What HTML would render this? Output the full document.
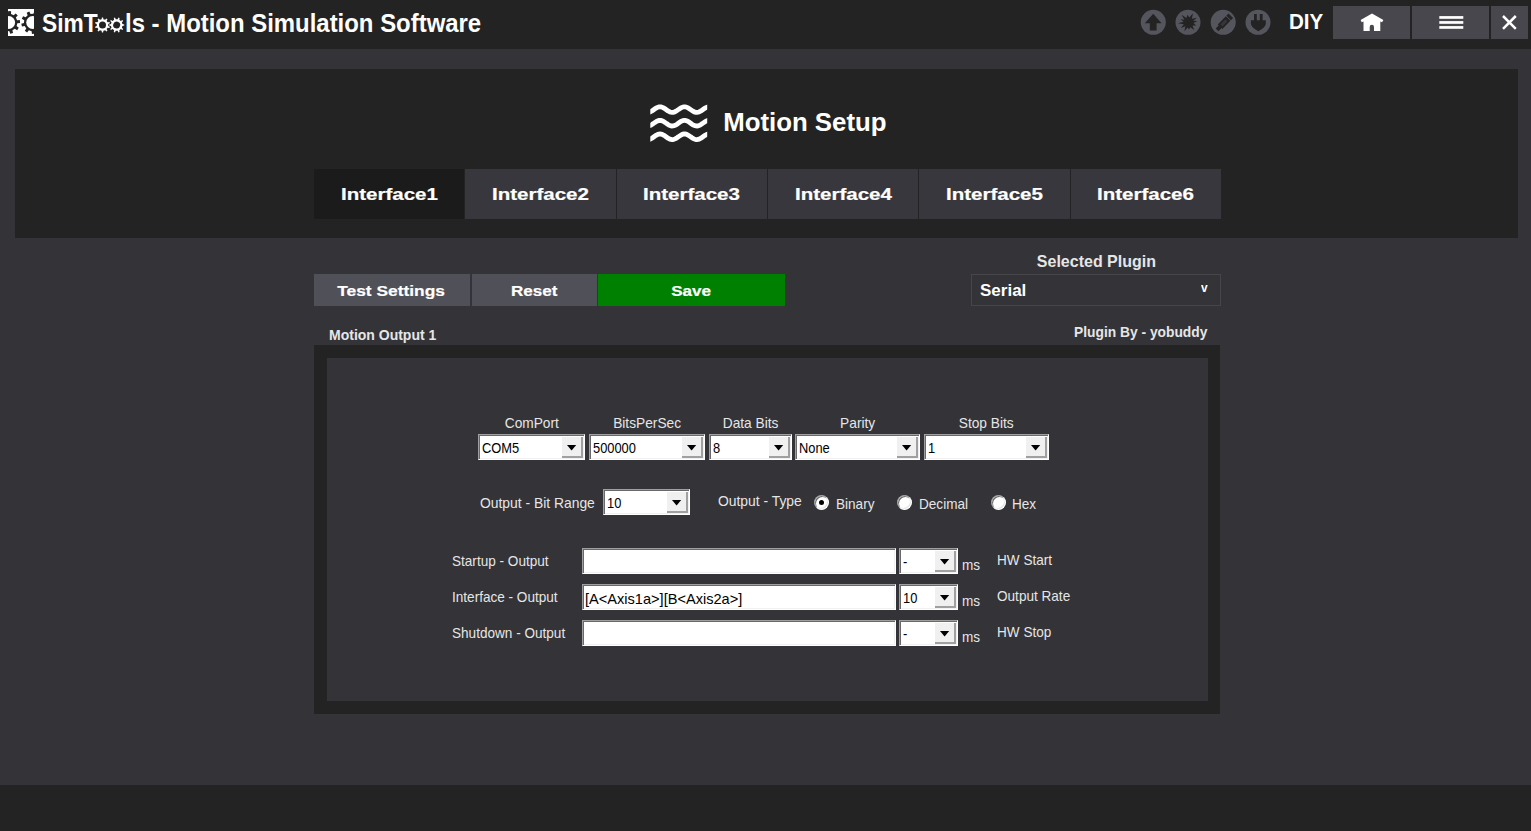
<!DOCTYPE html>
<html><head><meta charset="utf-8">
<style>
*{margin:0;padding:0;box-sizing:border-box}
html,body{width:1531px;height:831px;overflow:hidden;background:#333338;font-family:"Liberation Sans",sans-serif;color:#fff}
.a{position:absolute}
.t{white-space:nowrap}
.tab{top:169px;height:50px;background:#38373d}
.btn{top:274px;height:32px;background:#505058}
.cb{height:26px;background:#fff;border:1px solid;border-color:#a0a0a0 #fff #fff #a0a0a0;box-shadow:inset 1px 1px 0 #696969,inset -1px -1px 0 #f0f0f0}
.cb i{position:absolute;right:1px;top:1px;bottom:1px;width:22px;background:#f0f0f0;box-shadow:inset 1px 1px 0 #fff,inset -2px -2px 0 #a0a0a0}
.cb i svg{position:absolute;left:5.5px;top:9px}
.tb{height:26px;background:#fff;border:1px solid;border-color:#a0a0a0 #fff #fff #a0a0a0;box-shadow:inset 1px 1px 0 #696969,inset -1px -1px 0 #f0f0f0}
.rd{width:15px;height:15px;border-radius:50%;background:#fff;border:1px solid;border-color:#a0a0a0 #fff #fff #a0a0a0;box-shadow:inset 1px 1px 0 #696969,inset -1px -1px 0 #e3e3e3}
</style></head><body>
<div class="a" style="left:0;top:0;width:1531px;height:49px;background:#232323"></div>
<div class="a" style="left:0;top:785px;width:1531px;height:46px;background:#232323"></div>
<div class="a" style="left:15px;top:69px;width:1503px;height:168.5px;background:#232323"></div>

<svg class="a" style="left:0;top:0" width="1531" height="49" viewBox="0 0 1531 49">
<defs><clipPath id="lc"><rect x="8" y="9" width="26" height="27"/></clipPath></defs>
<rect x="8" y="9" width="26" height="27" fill="#fff"/>
<g clip-path="url(#lc)">
<path d="M17.09 20.19 L19.84 20.09 L20.09 22.94 L17.36 23.32 L16.61 26.12 L18.78 27.82 L17.15 30.16 L14.81 28.69 L12.43 30.36 L13.01 33.05 L10.25 33.79 L9.40 31.17 L6.51 30.92 L5.22 33.35 L2.63 32.15 L3.66 29.59 L1.61 27.54 L-0.95 28.57 L-2.15 25.98 L0.28 24.69 L0.03 21.80 L-2.59 20.95 L-1.85 18.19 L0.84 18.77 L2.51 16.39 L1.04 14.05 L3.38 12.42 L5.08 14.59 L7.88 13.84 L8.26 11.11 L11.11 11.36 L11.01 14.11 L13.64 15.34 L15.69 13.49 L17.71 15.51 L15.86 17.56Z" fill="#232323"/>
<path d="M24.68 26.09 L21.97 26.62 L21.28 23.85 L23.92 23.05 L24.22 20.16 L21.81 18.83 L23.06 16.26 L25.60 17.34 L27.68 15.32 L26.69 12.75 L29.31 11.59 L30.55 14.04 L33.45 13.84 L34.34 11.23 L37.09 12.02 L36.47 14.71 L38.82 16.41 L41.18 14.99 L42.78 17.36 L40.57 19.02 L41.27 21.83 L44.00 22.26 L43.70 25.10 L40.95 24.96 L39.67 27.56 L41.48 29.64 L39.43 31.63 L37.41 29.75 L34.76 30.93 L34.81 33.68 L31.96 33.88 L31.63 31.15 L28.84 30.35 L27.11 32.49 L24.80 30.81 L26.30 28.50Z" fill="#232323"/>
<circle cx="8.7" cy="22.5" r="6.4" fill="#fff"/>
<circle cx="32.6" cy="22.5" r="6.4" fill="#fff"/>
</g>
<path transform="translate(102.5 25)" d="M-0.91 -5.73 L-0.60 -7.58 L0.60 -7.58 L0.91 -5.73 L2.63 -5.17 L3.97 -6.48 L4.94 -5.78 L4.10 -4.10 L5.17 -2.63 L7.02 -2.91 L7.39 -1.77 L5.73 -0.91 L5.73 0.91 L7.39 1.77 L7.02 2.91 L5.17 2.63 L4.10 4.10 L4.94 5.78 L3.97 6.48 L2.63 5.17 L0.91 5.73 L0.60 7.58 L-0.60 7.58 L-0.91 5.73 L-2.63 5.17 L-3.97 6.48 L-4.94 5.78 L-4.10 4.10 L-5.17 2.63 L-7.02 2.91 L-7.39 1.77 L-5.73 0.91 L-5.73 -0.91 L-7.39 -1.77 L-7.02 -2.91 L-5.17 -2.63 L-4.10 -4.10 L-4.94 -5.78 L-3.97 -6.48 L-2.63 -5.17Z M-3.50 0.00a3.50 3.50 0 1 0 7.00 0a3.50 3.50 0 1 0 -7.00 0Z" fill="#fff" fill-rule="evenodd"/>
<path transform="translate(116.7 25) rotate(18)" d="M-0.91 -5.73 L-0.60 -7.58 L0.60 -7.58 L0.91 -5.73 L2.63 -5.17 L3.97 -6.48 L4.94 -5.78 L4.10 -4.10 L5.17 -2.63 L7.02 -2.91 L7.39 -1.77 L5.73 -0.91 L5.73 0.91 L7.39 1.77 L7.02 2.91 L5.17 2.63 L4.10 4.10 L4.94 5.78 L3.97 6.48 L2.63 5.17 L0.91 5.73 L0.60 7.58 L-0.60 7.58 L-0.91 5.73 L-2.63 5.17 L-3.97 6.48 L-4.94 5.78 L-4.10 4.10 L-5.17 2.63 L-7.02 2.91 L-7.39 1.77 L-5.73 0.91 L-5.73 -0.91 L-7.39 -1.77 L-7.02 -2.91 L-5.17 -2.63 L-4.10 -4.10 L-4.94 -5.78 L-3.97 -6.48 L-2.63 -5.17Z M-3.50 0.00a3.50 3.50 0 1 0 7.00 0a3.50 3.50 0 1 0 -7.00 0Z" fill="#fff" fill-rule="evenodd"/>
<circle cx="1153.3" cy="22.3" r="12.5" fill="#55555d"/>
<circle cx="1188" cy="22.3" r="12.5" fill="#55555d"/>
<circle cx="1223.2" cy="22.3" r="12.5" fill="#55555d"/>
<circle cx="1258" cy="22.3" r="12.5" fill="#55555d"/>
<path d="M1153.2 13.7L1161.6 23.2H1156.6V30.4H1149.8V23.2H1144.8Z" fill="#232323"/>

<path d="M1180.43 19.24 L1184.40 19.64 L1181.58 14.87 L1186.40 17.96 L1187.49 14.87 L1189.29 17.56 L1192.91 13.30 L1191.92 18.86 L1196.88 17.82 L1193.23 20.87 L1197.49 21.11 L1193.47 23.07 L1196.20 25.60 L1192.47 25.53 L1194.18 29.99 L1190.30 27.16 L1189.11 29.47 L1187.63 27.42 L1184.40 31.29 L1185.32 26.36 L1180.90 28.03 L1183.81 24.23 L1178.03 23.31 L1183.56 21.74Z" fill="#232323"/>
<g transform="translate(1224 22.75) rotate(-46)">
<rect x="6.6" y="-3.2" width="3.2" height="6.4" fill="#232323"/>
<rect x="-5.6" y="-3.2" width="11.5" height="6.4" fill="#232323"/>
<rect x="-3.6" y="-1.5" width="7" height="3" fill="#35353a"/>
<rect x="-10" y="-1.9" width="4.6" height="3.8" fill="#232323"/>
</g>
<rect x="1254" y="14" width="2.8" height="7" fill="#232323"/>
<rect x="1259.8" y="14" width="2.8" height="7" fill="#232323"/>
<path d="M1250.9 20.3H1265.8V23.8Q1265.6 27.4 1258.3 31.3Q1251.1 27.4 1250.9 23.8Z" fill="#232323"/>
<rect x="1333" y="6" width="77" height="33" fill="#47474d"/>
<rect x="1412" y="6" width="77" height="33" fill="#47474d"/>
<rect x="1491" y="6" width="37" height="33" fill="#47474d"/>
<path d="M1372 13.6L1383.4 20.1L1382.1 22.3L1380.3 21.4V31.1H1374V27A2.15 2.15 0 0 0 1369.7 27V31.1H1363.5V21.4L1361.7 22.3L1360.6 20.1Z" fill="#fff"/>
<rect x="1439.3" y="16.1" width="24" height="2.7" fill="#fff"/>
<rect x="1439.3" y="21.1" width="24" height="2.7" fill="#fff"/>
<rect x="1439.3" y="26.1" width="24" height="2.7" fill="#fff"/>
<path d="M1503 16L1515.8 28.8M1515.8 16L1503 28.8" stroke="#fff" stroke-width="2.5"/>
</svg>

<svg class="a" style="left:0;top:0" width="1531" height="160" viewBox="0 0 1531 160">
<defs><clipPath id="wc"><rect x="650.3" y="95" width="56.9" height="55"/></clipPath></defs>
<g clip-path="url(#wc)" fill="none" stroke="#fff" stroke-width="4.8">
<path transform="translate(0 109.6)" d="M646.0 2.52 L647.0 2.75 L648.0 2.79 L649.0 2.66 L650.0 2.35 L651.0 1.88 L652.0 1.30 L653.0 0.62 L654.0 -0.09 L655.0 -0.80 L656.0 -1.45 L657.0 -2.01 L658.0 -2.44 L659.0 -2.71 L660.0 -2.80 L661.0 -2.71 L662.0 -2.44 L663.0 -2.01 L664.0 -1.45 L665.0 -0.80 L666.0 -0.09 L667.0 0.62 L668.0 1.30 L669.0 1.88 L670.0 2.35 L671.0 2.66 L672.0 2.79 L673.0 2.75 L674.0 2.52 L675.0 2.13 L676.0 1.60 L677.0 0.97 L678.0 0.27 L679.0 -0.45 L680.0 -1.13 L681.0 -1.75 L682.0 -2.24 L683.0 -2.60 L684.0 -2.78 L685.0 -2.78 L686.0 -2.60 L687.0 -2.24 L688.0 -1.75 L689.0 -1.13 L690.0 -0.45 L691.0 0.27 L692.0 0.97 L693.0 1.60 L694.0 2.13 L695.0 2.52 L696.0 2.75 L697.0 2.79 L698.0 2.66 L699.0 2.35 L700.0 1.88 L701.0 1.30 L702.0 0.62 L703.0 -0.09 L704.0 -0.80 L705.0 -1.45 L706.0 -2.01 L707.0 -2.44 L708.0 -2.71 L709.0 -2.80 L710.0 -2.71 L711.0 -2.44"/>
<path transform="translate(0 123.2)" d="M646.0 2.52 L647.0 2.75 L648.0 2.79 L649.0 2.66 L650.0 2.35 L651.0 1.88 L652.0 1.30 L653.0 0.62 L654.0 -0.09 L655.0 -0.80 L656.0 -1.45 L657.0 -2.01 L658.0 -2.44 L659.0 -2.71 L660.0 -2.80 L661.0 -2.71 L662.0 -2.44 L663.0 -2.01 L664.0 -1.45 L665.0 -0.80 L666.0 -0.09 L667.0 0.62 L668.0 1.30 L669.0 1.88 L670.0 2.35 L671.0 2.66 L672.0 2.79 L673.0 2.75 L674.0 2.52 L675.0 2.13 L676.0 1.60 L677.0 0.97 L678.0 0.27 L679.0 -0.45 L680.0 -1.13 L681.0 -1.75 L682.0 -2.24 L683.0 -2.60 L684.0 -2.78 L685.0 -2.78 L686.0 -2.60 L687.0 -2.24 L688.0 -1.75 L689.0 -1.13 L690.0 -0.45 L691.0 0.27 L692.0 0.97 L693.0 1.60 L694.0 2.13 L695.0 2.52 L696.0 2.75 L697.0 2.79 L698.0 2.66 L699.0 2.35 L700.0 1.88 L701.0 1.30 L702.0 0.62 L703.0 -0.09 L704.0 -0.80 L705.0 -1.45 L706.0 -2.01 L707.0 -2.44 L708.0 -2.71 L709.0 -2.80 L710.0 -2.71 L711.0 -2.44"/>
<path transform="translate(0 136.8)" d="M646.0 2.52 L647.0 2.75 L648.0 2.79 L649.0 2.66 L650.0 2.35 L651.0 1.88 L652.0 1.30 L653.0 0.62 L654.0 -0.09 L655.0 -0.80 L656.0 -1.45 L657.0 -2.01 L658.0 -2.44 L659.0 -2.71 L660.0 -2.80 L661.0 -2.71 L662.0 -2.44 L663.0 -2.01 L664.0 -1.45 L665.0 -0.80 L666.0 -0.09 L667.0 0.62 L668.0 1.30 L669.0 1.88 L670.0 2.35 L671.0 2.66 L672.0 2.79 L673.0 2.75 L674.0 2.52 L675.0 2.13 L676.0 1.60 L677.0 0.97 L678.0 0.27 L679.0 -0.45 L680.0 -1.13 L681.0 -1.75 L682.0 -2.24 L683.0 -2.60 L684.0 -2.78 L685.0 -2.78 L686.0 -2.60 L687.0 -2.24 L688.0 -1.75 L689.0 -1.13 L690.0 -0.45 L691.0 0.27 L692.0 0.97 L693.0 1.60 L694.0 2.13 L695.0 2.52 L696.0 2.75 L697.0 2.79 L698.0 2.66 L699.0 2.35 L700.0 1.88 L701.0 1.30 L702.0 0.62 L703.0 -0.09 L704.0 -0.80 L705.0 -1.45 L706.0 -2.01 L707.0 -2.44 L708.0 -2.71 L709.0 -2.80 L710.0 -2.71 L711.0 -2.44"/>
</g></svg>

<div class="a tab" style="left:314.00px;width:150.33px;background:#1b1b1b"></div>
<div class="a tab" style="left:465.33px;width:150.33px"></div>
<div class="a tab" style="left:616.67px;width:150.33px"></div>
<div class="a tab" style="left:768.00px;width:150.33px"></div>
<div class="a tab" style="left:919.33px;width:150.33px"></div>
<div class="a tab" style="left:1070.67px;width:150.33px"></div>
<div class="a btn" style="left:314px;width:156px"></div>
<div class="a btn" style="left:472px;width:125px"></div>
<div class="a btn" style="left:598px;width:187px;background:#008000"></div>
<div class="a" style="left:971px;top:274px;width:250px;height:32px;border:1px solid #45454a"></div>
<div class="a" style="left:314px;top:345px;width:906px;height:369px;background:#232323"></div>
<div class="a" style="left:327px;top:358px;width:881px;height:343px;background:#333338"></div>
<div class="a cb" style="left:478px;top:434px;width:107px"><i><svg width="10" height="6" viewBox="0 0 10 6"><path d="M0 0H9.2L4.6 5.6Z" fill="#000"/></svg></i></div>
<div class="a cb" style="left:589px;top:434px;width:116px"><i><svg width="10" height="6" viewBox="0 0 10 6"><path d="M0 0H9.2L4.6 5.6Z" fill="#000"/></svg></i></div>
<div class="a cb" style="left:709px;top:434px;width:83px"><i><svg width="10" height="6" viewBox="0 0 10 6"><path d="M0 0H9.2L4.6 5.6Z" fill="#000"/></svg></i></div>
<div class="a cb" style="left:795px;top:434px;width:125px"><i><svg width="10" height="6" viewBox="0 0 10 6"><path d="M0 0H9.2L4.6 5.6Z" fill="#000"/></svg></i></div>
<div class="a cb" style="left:924px;top:434px;width:125px"><i><svg width="10" height="6" viewBox="0 0 10 6"><path d="M0 0H9.2L4.6 5.6Z" fill="#000"/></svg></i></div>
<div class="a cb" style="left:603px;top:489px;width:87px"><i><svg width="10" height="6" viewBox="0 0 10 6"><path d="M0 0H9.2L4.6 5.6Z" fill="#000"/></svg></i></div>
<div class="a rd" style="left:814.2px;top:495px"></div>
<div class="a rd" style="left:896.5px;top:495px"></div>
<div class="a rd" style="left:990.5px;top:495px"></div>
<div class="a" style="left:819.2px;top:500px;width:5px;height:5px;border-radius:50%;background:#000"></div>
<div class="a tb" style="left:582px;top:548px;width:314px"></div>
<div class="a cb" style="left:899px;top:548px;width:59px"><i><svg width="10" height="6" viewBox="0 0 10 6"><path d="M0 0H9.2L4.6 5.6Z" fill="#000"/></svg></i></div>
<div class="a tb" style="left:582px;top:584px;width:314px"></div>
<div class="a cb" style="left:899px;top:584px;width:59px"><i><svg width="10" height="6" viewBox="0 0 10 6"><path d="M0 0H9.2L4.6 5.6Z" fill="#000"/></svg></i></div>
<div class="a tb" style="left:582px;top:620px;width:314px"></div>
<div class="a cb" style="left:899px;top:620px;width:59px"><i><svg width="10" height="6" viewBox="0 0 10 6"><path d="M0 0H9.2L4.6 5.6Z" fill="#000"/></svg></i></div>
<div class="a t" style="top:10.29px;font-size:26px;line-height:26px;font-weight:bold;left:42.3px;"><span style="display:inline-block;transform:scaleX(0.875);transform-origin:0 0;">SimT</span></div>
<div class="a t" style="top:10.29px;font-size:26px;line-height:26px;font-weight:bold;left:125px;"><span style="display:inline-block;transform:scaleX(0.92);transform-origin:0 0;">ls - Motion Simulation Software</span></div>
<div class="a t" style="top:11.18px;font-size:22px;line-height:22px;font-weight:bold;left:1289.2px;"><span style="display:inline-block;transform:scaleX(0.935);transform-origin:0 0;">DIY</span></div>
<div class="a t" style="top:110.46px;font-size:25.8px;line-height:25.8px;font-weight:bold;left:723.2px;">Motion Setup</div>
<div class="a t" style="top:186.2px;font-size:16.3px;line-height:16.3px;font-weight:bold;left:189.16666666666669px;width:400px;text-align:center;"><span style="display:inline-block;transform:scaleX(1.26);transform-origin:50% 0;-webkit-text-stroke:0.2px currentColor;">Interface1</span></div>
<div class="a t" style="top:186.2px;font-size:16.3px;line-height:16.3px;font-weight:bold;left:340.5px;width:400px;text-align:center;"><span style="display:inline-block;transform:scaleX(1.26);transform-origin:50% 0;-webkit-text-stroke:0.2px currentColor;">Interface2</span></div>
<div class="a t" style="top:186.2px;font-size:16.3px;line-height:16.3px;font-weight:bold;left:491.83333333333337px;width:400px;text-align:center;"><span style="display:inline-block;transform:scaleX(1.26);transform-origin:50% 0;-webkit-text-stroke:0.2px currentColor;">Interface3</span></div>
<div class="a t" style="top:186.2px;font-size:16.3px;line-height:16.3px;font-weight:bold;left:643.1666666666666px;width:400px;text-align:center;"><span style="display:inline-block;transform:scaleX(1.26);transform-origin:50% 0;-webkit-text-stroke:0.2px currentColor;">Interface4</span></div>
<div class="a t" style="top:186.2px;font-size:16.3px;line-height:16.3px;font-weight:bold;left:794.5px;width:400px;text-align:center;"><span style="display:inline-block;transform:scaleX(1.26);transform-origin:50% 0;-webkit-text-stroke:0.2px currentColor;">Interface5</span></div>
<div class="a t" style="top:186.2px;font-size:16.3px;line-height:16.3px;font-weight:bold;left:945.8333333333335px;width:400px;text-align:center;"><span style="display:inline-block;transform:scaleX(1.26);transform-origin:50% 0;-webkit-text-stroke:0.2px currentColor;">Interface6</span></div>
<div class="a t" style="top:283.38px;font-size:15.5px;line-height:15.5px;font-weight:bold;left:191.5px;width:400px;text-align:center;"><span style="display:inline-block;transform:scaleX(1.12);transform-origin:50% 0;-webkit-text-stroke:0.2px currentColor;">Test Settings</span></div>
<div class="a t" style="top:283.38px;font-size:15.5px;line-height:15.5px;font-weight:bold;left:334.5px;width:400px;text-align:center;"><span style="display:inline-block;transform:scaleX(1.1);transform-origin:50% 0;-webkit-text-stroke:0.2px currentColor;">Reset</span></div>
<div class="a t" style="top:283.38px;font-size:15.5px;line-height:15.5px;font-weight:bold;left:491.5px;width:400px;text-align:center;"><span style="display:inline-block;transform:scaleX(1.1);transform-origin:50% 0;-webkit-text-stroke:0.2px currentColor;">Save</span></div>
<div class="a t" style="top:252.53px;font-size:16.5px;line-height:16.5px;font-weight:bold;color:#e6e6e6;left:896px;width:400px;text-align:center;"><span style="display:inline-block;transform:scaleX(0.97);transform-origin:50% 0;">Selected Plugin</span></div>
<div class="a t" style="top:281.91px;font-size:17px;line-height:17px;font-weight:bold;left:980px;">Serial</div>
<div class="a t" style="top:282.42px;font-size:12.5px;line-height:12.5px;font-weight:bold;left:1200.8px;"><span style="display:inline-block;transform:scaleX(0.95);transform-origin:0 0;">v</span></div>
<div class="a t" style="top:328.45px;font-size:14px;line-height:14px;font-weight:bold;color:#e6e6e6;left:329px;">Motion Output 1</div>
<div class="a t" style="top:324.75px;font-size:14px;line-height:14px;font-weight:bold;color:#e6e6e6;left:807px;width:400px;text-align:right;"><span style="display:inline-block;transform:scaleX(0.985);transform-origin:100% 0;">Plugin By - yobuddy</span></div>
<div class="a t" style="top:439.88px;font-size:15.5px;line-height:15.5px;color:#000;left:482.2px;"><span style="display:inline-block;transform:scaleX(0.83);transform-origin:0 0;">COM5</span></div>
<div class="a t" style="top:415.64px;font-size:14.6px;line-height:14.6px;color:#e6e6e6;left:331.5px;width:400px;text-align:center;"><span style="display:inline-block;transform:scaleX(0.94);transform-origin:50% 0;">ComPort</span></div>
<div class="a t" style="top:439.88px;font-size:15.5px;line-height:15.5px;color:#000;left:593.2px;"><span style="display:inline-block;transform:scaleX(0.83);transform-origin:0 0;">500000</span></div>
<div class="a t" style="top:415.64px;font-size:14.6px;line-height:14.6px;color:#e6e6e6;left:447.0px;width:400px;text-align:center;"><span style="display:inline-block;transform:scaleX(0.94);transform-origin:50% 0;">BitsPerSec</span></div>
<div class="a t" style="top:439.88px;font-size:15.5px;line-height:15.5px;color:#000;left:713.2px;"><span style="display:inline-block;transform:scaleX(0.83);transform-origin:0 0;">8</span></div>
<div class="a t" style="top:415.64px;font-size:14.6px;line-height:14.6px;color:#e6e6e6;left:550.5px;width:400px;text-align:center;"><span style="display:inline-block;transform:scaleX(0.94);transform-origin:50% 0;">Data Bits</span></div>
<div class="a t" style="top:439.88px;font-size:15.5px;line-height:15.5px;color:#000;left:799.2px;"><span style="display:inline-block;transform:scaleX(0.83);transform-origin:0 0;">None</span></div>
<div class="a t" style="top:415.64px;font-size:14.6px;line-height:14.6px;color:#e6e6e6;left:657.5px;width:400px;text-align:center;"><span style="display:inline-block;transform:scaleX(0.94);transform-origin:50% 0;">Parity</span></div>
<div class="a t" style="top:439.88px;font-size:15.5px;line-height:15.5px;color:#000;left:928.2px;"><span style="display:inline-block;transform:scaleX(0.83);transform-origin:0 0;">1</span></div>
<div class="a t" style="top:415.64px;font-size:14.6px;line-height:14.6px;color:#e6e6e6;left:786.5px;width:400px;text-align:center;"><span style="display:inline-block;transform:scaleX(0.94);transform-origin:50% 0;">Stop Bits</span></div>
<div class="a t" style="top:495.64px;font-size:14.6px;line-height:14.6px;color:#e6e6e6;left:480px;"><span style="display:inline-block;transform:scaleX(0.95);transform-origin:0 0;">Output - Bit Range</span></div>
<div class="a t" style="top:494.88px;font-size:15.5px;line-height:15.5px;color:#000;left:607.2px;"><span style="display:inline-block;transform:scaleX(0.83);transform-origin:0 0;">10</span></div>
<div class="a t" style="top:494.14px;font-size:14.6px;line-height:14.6px;color:#e6e6e6;left:718.3px;"><span style="display:inline-block;transform:scaleX(0.95);transform-origin:0 0;">Output - Type</span></div>
<div class="a t" style="top:496.64px;font-size:14.6px;line-height:14.6px;color:#e6e6e6;left:836px;"><span style="display:inline-block;transform:scaleX(0.93);transform-origin:0 0;">Binary</span></div>
<div class="a t" style="top:496.64px;font-size:14.6px;line-height:14.6px;color:#e6e6e6;left:918.7px;"><span style="display:inline-block;transform:scaleX(0.93);transform-origin:0 0;">Decimal</span></div>
<div class="a t" style="top:496.64px;font-size:14.6px;line-height:14.6px;color:#e6e6e6;left:1012px;"><span style="display:inline-block;transform:scaleX(0.93);transform-origin:0 0;">Hex</span></div>
<div class="a t" style="top:553.64px;font-size:14.6px;line-height:14.6px;color:#e6e6e6;left:452px;"><span style="display:inline-block;transform:scaleX(0.93);transform-origin:0 0;">Startup - Output</span></div>
<div class="a t" style="top:553.88px;font-size:15.5px;line-height:15.5px;color:#000;left:903.2px;"><span style="display:inline-block;transform:scaleX(0.83);transform-origin:0 0;">-</span></div>
<div class="a t" style="top:558.14px;font-size:14.6px;line-height:14.6px;color:#e6e6e6;left:962px;"><span style="display:inline-block;transform:scaleX(0.93);transform-origin:0 0;">ms</span></div>
<div class="a t" style="top:553.14px;font-size:14.6px;line-height:14.6px;color:#e6e6e6;left:997.4px;"><span style="display:inline-block;transform:scaleX(0.93);transform-origin:0 0;">HW Start</span></div>
<div class="a t" style="top:589.64px;font-size:14.6px;line-height:14.6px;color:#e6e6e6;left:452px;"><span style="display:inline-block;transform:scaleX(0.93);transform-origin:0 0;">Interface - Output</span></div>
<div class="a t" style="top:592.1px;font-size:14.3px;line-height:14.3px;color:#000;left:585.3px;"><span style="display:inline-block;transform:scaleX(1.02);transform-origin:0 0;">[A&lt;Axis1a&gt;][B&lt;Axis2a&gt;]</span></div>
<div class="a t" style="top:589.88px;font-size:15.5px;line-height:15.5px;color:#000;left:903.2px;"><span style="display:inline-block;transform:scaleX(0.83);transform-origin:0 0;">10</span></div>
<div class="a t" style="top:594.14px;font-size:14.6px;line-height:14.6px;color:#e6e6e6;left:962px;"><span style="display:inline-block;transform:scaleX(0.93);transform-origin:0 0;">ms</span></div>
<div class="a t" style="top:589.14px;font-size:14.6px;line-height:14.6px;color:#e6e6e6;left:997.4px;"><span style="display:inline-block;transform:scaleX(0.93);transform-origin:0 0;">Output Rate</span></div>
<div class="a t" style="top:625.64px;font-size:14.6px;line-height:14.6px;color:#e6e6e6;left:452px;"><span style="display:inline-block;transform:scaleX(0.93);transform-origin:0 0;">Shutdown - Output</span></div>
<div class="a t" style="top:625.88px;font-size:15.5px;line-height:15.5px;color:#000;left:903.2px;"><span style="display:inline-block;transform:scaleX(0.83);transform-origin:0 0;">-</span></div>
<div class="a t" style="top:630.14px;font-size:14.6px;line-height:14.6px;color:#e6e6e6;left:962px;"><span style="display:inline-block;transform:scaleX(0.93);transform-origin:0 0;">ms</span></div>
<div class="a t" style="top:625.14px;font-size:14.6px;line-height:14.6px;color:#e6e6e6;left:997.4px;"><span style="display:inline-block;transform:scaleX(0.93);transform-origin:0 0;">HW Stop</span></div>
</body></html>
